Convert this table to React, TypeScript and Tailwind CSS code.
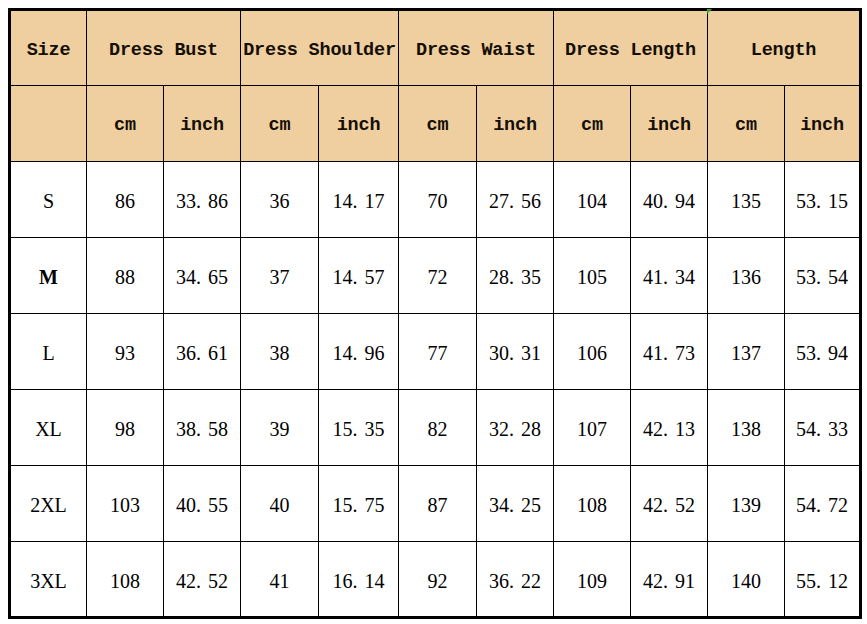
import React from "react";

const groups = ["Dress Bust", "Dress Shoulder", "Dress Waist", "Dress Length", "Length"];

const rows: [string, ...string[]][] = [
  ["S", "86", "33.86", "36", "14.17", "70", "27.56", "104", "40.94", "135", "53.15"],
  ["M", "88", "34.65", "37", "14.57", "72", "28.35", "105", "41.34", "136", "53.54"],
  ["L", "93", "36.61", "38", "14.96", "77", "30.31", "106", "41.73", "137", "53.94"],
  ["XL", "98", "38.58", "39", "15.35", "82", "32.28", "107", "42.13", "138", "54.33"],
  ["2XL", "103", "40.55", "40", "15.75", "87", "34.25", "108", "42.52", "139", "54.72"],
  ["3XL", "108", "42.52", "41", "16.14", "92", "36.22", "109", "42.91", "140", "55.12"],
];

// decimal values in the source render with a wide full stop
const Num = ({ value }: { value: string }) => {
  const [a, b] = value.split(".");
  if (b === undefined) return <>{value}</>;
  return (
    <>
      {a}
      <span className="inline-block w-[12px] text-left">.</span>
      {b}
    </>
  );
};

const headCell =
  "bg-[#efcea0] flex items-center justify-center pt-[5px] font-bold text-[18.5px] tracking-[-0.2px] text-[#140e05] whitespace-nowrap font-['Liberation_Mono',monospace]";
const bodyCell =
  "bg-white flex items-center justify-center pt-[3px] text-[20px] text-black whitespace-nowrap font-['Liberation_Serif',serif]";

export default function App() {
  return (
    <div className="min-h-screen bg-white pl-[8px] pt-[8px]">
      <div className="inline-grid grid-cols-[75px_76px_76px_77px_79px_77px_76px_76px_76px_76px_74px] grid-rows-[74px_75px_75px_75px_75px_75px_75px_74px] gap-px bg-black border-[3px] border-black">
        {/* header row 1 */}
        <div className={headCell}>Size</div>
        {groups.map((g) => (
          <div key={g} className={`${headCell} col-span-2 relative`}>
            {g === "Length" && (
              <span className="absolute -left-[1px] -top-[2px] w-0 h-0 border-t-[5px] border-t-[#3aa02a] border-r-[5px] border-r-transparent" />
            )}
            {g}
          </div>
        ))}

        {/* header row 2 */}
        <div className={headCell}></div>
        {groups.map((g) => (
          <React.Fragment key={g}>
            <div className={headCell}>cm</div>
            <div className={headCell}>inch</div>
          </React.Fragment>
        ))}

        {/* data */}
        {rows.map((r) =>
          r.map((v, i) => (
            <div key={`${r[0]}-${i}`} className={`${bodyCell} ${i === 0 && v === "M" ? "font-bold" : ""}`}>
              <Num value={v} />
            </div>
          ))
        )}
      </div>
    </div>
  );
}
